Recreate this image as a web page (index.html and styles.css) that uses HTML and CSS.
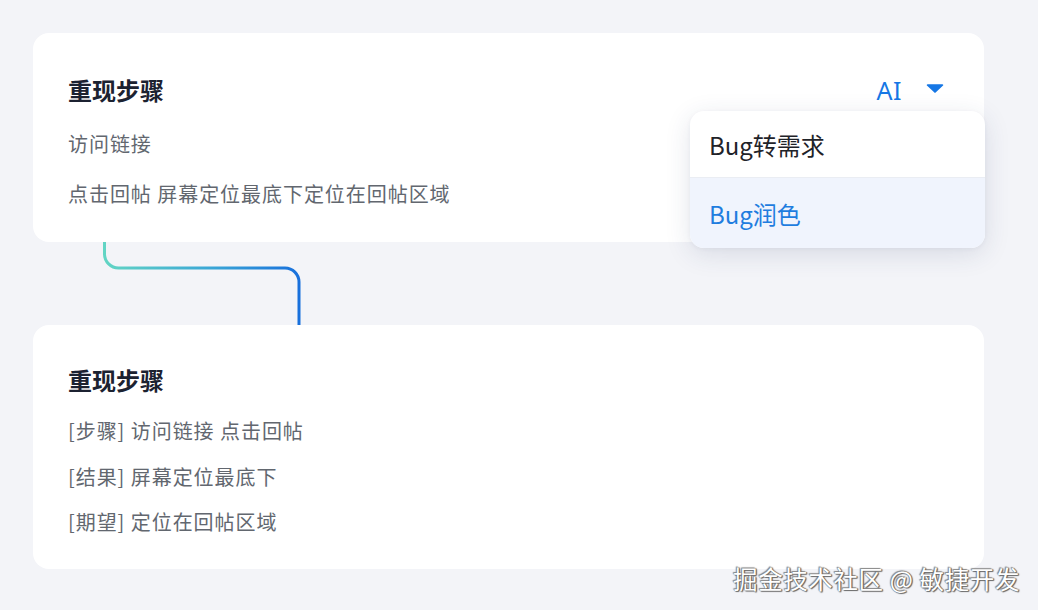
FILE: index.html
```html
<!DOCTYPE html>
<html lang="zh-CN">
<head>
<meta charset="utf-8">
<link rel="stylesheet" href="styles.css">
</head>
<body>
<div class="page">
  <section class="card card-top">
    <div class="card-head">
      <h2 class="title">重现步骤</h2>
      <div class="ai-toggle">
        <span class="ai-label">AI</span>
        <svg class="caret" width="18" height="11" viewBox="0 0 18 11"><path d="M1.5 1.2 H16.5 a0.8 0.8 0 0 1 0.6 1.3 L9.6 9.6 a0.8 0.8 0 0 1 -1.2 0 L0.9 2.5 a0.8 0.8 0 0 1 0.6 -1.3 Z" fill="#1677e5"/></svg>
      </div>
    </div>
    <ul class="lines lines-top">
      <li>访问链接</li>
      <li>点击回帖 屏幕定位最底下定位在回帖区域</li>
    </ul>
    <div class="menu">
      <div class="menu-item">Bug转需求</div>
      <div class="menu-item active">Bug润色</div>
    </div>
  </section>
  <div class="connector">
    <svg width="300" height="83" viewBox="0 0 300 83">
      <defs>
        <linearGradient id="g" x1="0" y1="0" x2="1" y2="0">
          <stop offset="0" stop-color="#62d5c4"/>
          <stop offset="0.55" stop-color="#3aa6d6"/>
          <stop offset="1" stop-color="#1870dc"/>
        </linearGradient>
      </defs>
      <path d="M71.5 0 V12 a14 14 0 0 0 14 14 H252 a14 14 0 0 1 14 14 V83" fill="none" stroke="url(#g)" stroke-width="3"/>
    </svg>
  </div>
  <section class="card card-bottom">
    <h2 class="title">重现步骤</h2>
    <ul class="lines lines-bottom">
      <li>[步骤] 访问链接 点击回帖</li>
      <li>[结果] 屏幕定位最底下</li>
      <li>[期望] 定位在回帖区域</li>
    </ul>
  </section>
  <div class="watermark">掘金技术社区 @ 敏捷开发</div>
</div>
</body>
</html>
```
FILE: styles.css
```css
* { box-sizing: border-box; }
html, body { margin: 0; padding: 0; }
body {
  background: #f3f4f8;
  font-family: "Noto Sans CJK SC", "Noto Sans", sans-serif;
  width: 1038px;
  height: 610px;
  overflow: hidden;
}
.page {
  position: relative;
  padding: 33px 54px 0 33px;
  height: 610px;
}
.card {
  background: #ffffff;
  border-radius: 16px;
  width: 951px;
}
.card-top {
  position: relative;
  height: 209px;
  padding: 41px 40px 33px 35px;
}
.card-bottom {
  height: 244px;
  padding: 39px 40px 32px 35px;
}
.card-head {
  display: flex;
  justify-content: space-between;
  align-items: center;
}
.title {
  margin: 0;
  font-size: 24px;
  line-height: 32px;
  font-weight: 700;
  color: #1c2231;
}
.ai-toggle {
  display: flex;
  align-items: center;
  gap: 24px;
  color: #1677e5;
}
.ai-label {
  font-size: 25px;
  line-height: 32px;
  font-family: "Noto Sans", "Noto Sans CJK SC", sans-serif;
  letter-spacing: 0.5px;
}
.caret { display: block; margin-top: -4px; }
.lines {
  list-style: none;
  margin: 0;
  padding: 0;
  display: flex;
  flex-direction: column;
  color: #62676f;
  font-size: 20px;
  line-height: 30px;
  letter-spacing: 0.95px;
}
.lines-top { margin-top: 23px; gap: 20px; }
.lines-bottom { margin-top: 20px; gap: 15.5px; }
.connector {
  height: 83px;
}
.connector svg { display: block; }
.menu {
  position: absolute;
  top: 78px;
  left: 657px;
  width: 295px;
  background: #ffffff;
  border-radius: 14px;
  overflow: hidden;
  box-shadow: 0 6px 26px rgba(40, 55, 100, 0.13), 0 1px 4px rgba(40, 55, 100, 0.05);
}
.menu-item {
  height: 67px;
  display: flex;
  align-items: center;
  padding-left: 19px;
  font-size: 24px;
  color: #1f2329;
}
.menu-item:first-child { border-bottom: 1px solid #eaedf3; }
.menu-item.active {
  height: 70px;
  background: #f0f4fd;
  color: #1f7ddf;
}
.watermark {
  position: absolute;
  right: 18px;
  bottom: 15px;
  font-size: 24.5px;
  line-height: 32px;
  color: #ffffff;
  letter-spacing: 0.6px;
  text-shadow: 0 0 1px #5a5a5a, 1px 1px 1px #6a6a6a, -1px -1px 1px #8a8a8a, 1px 0 1px #6a6a6a;
}
```
